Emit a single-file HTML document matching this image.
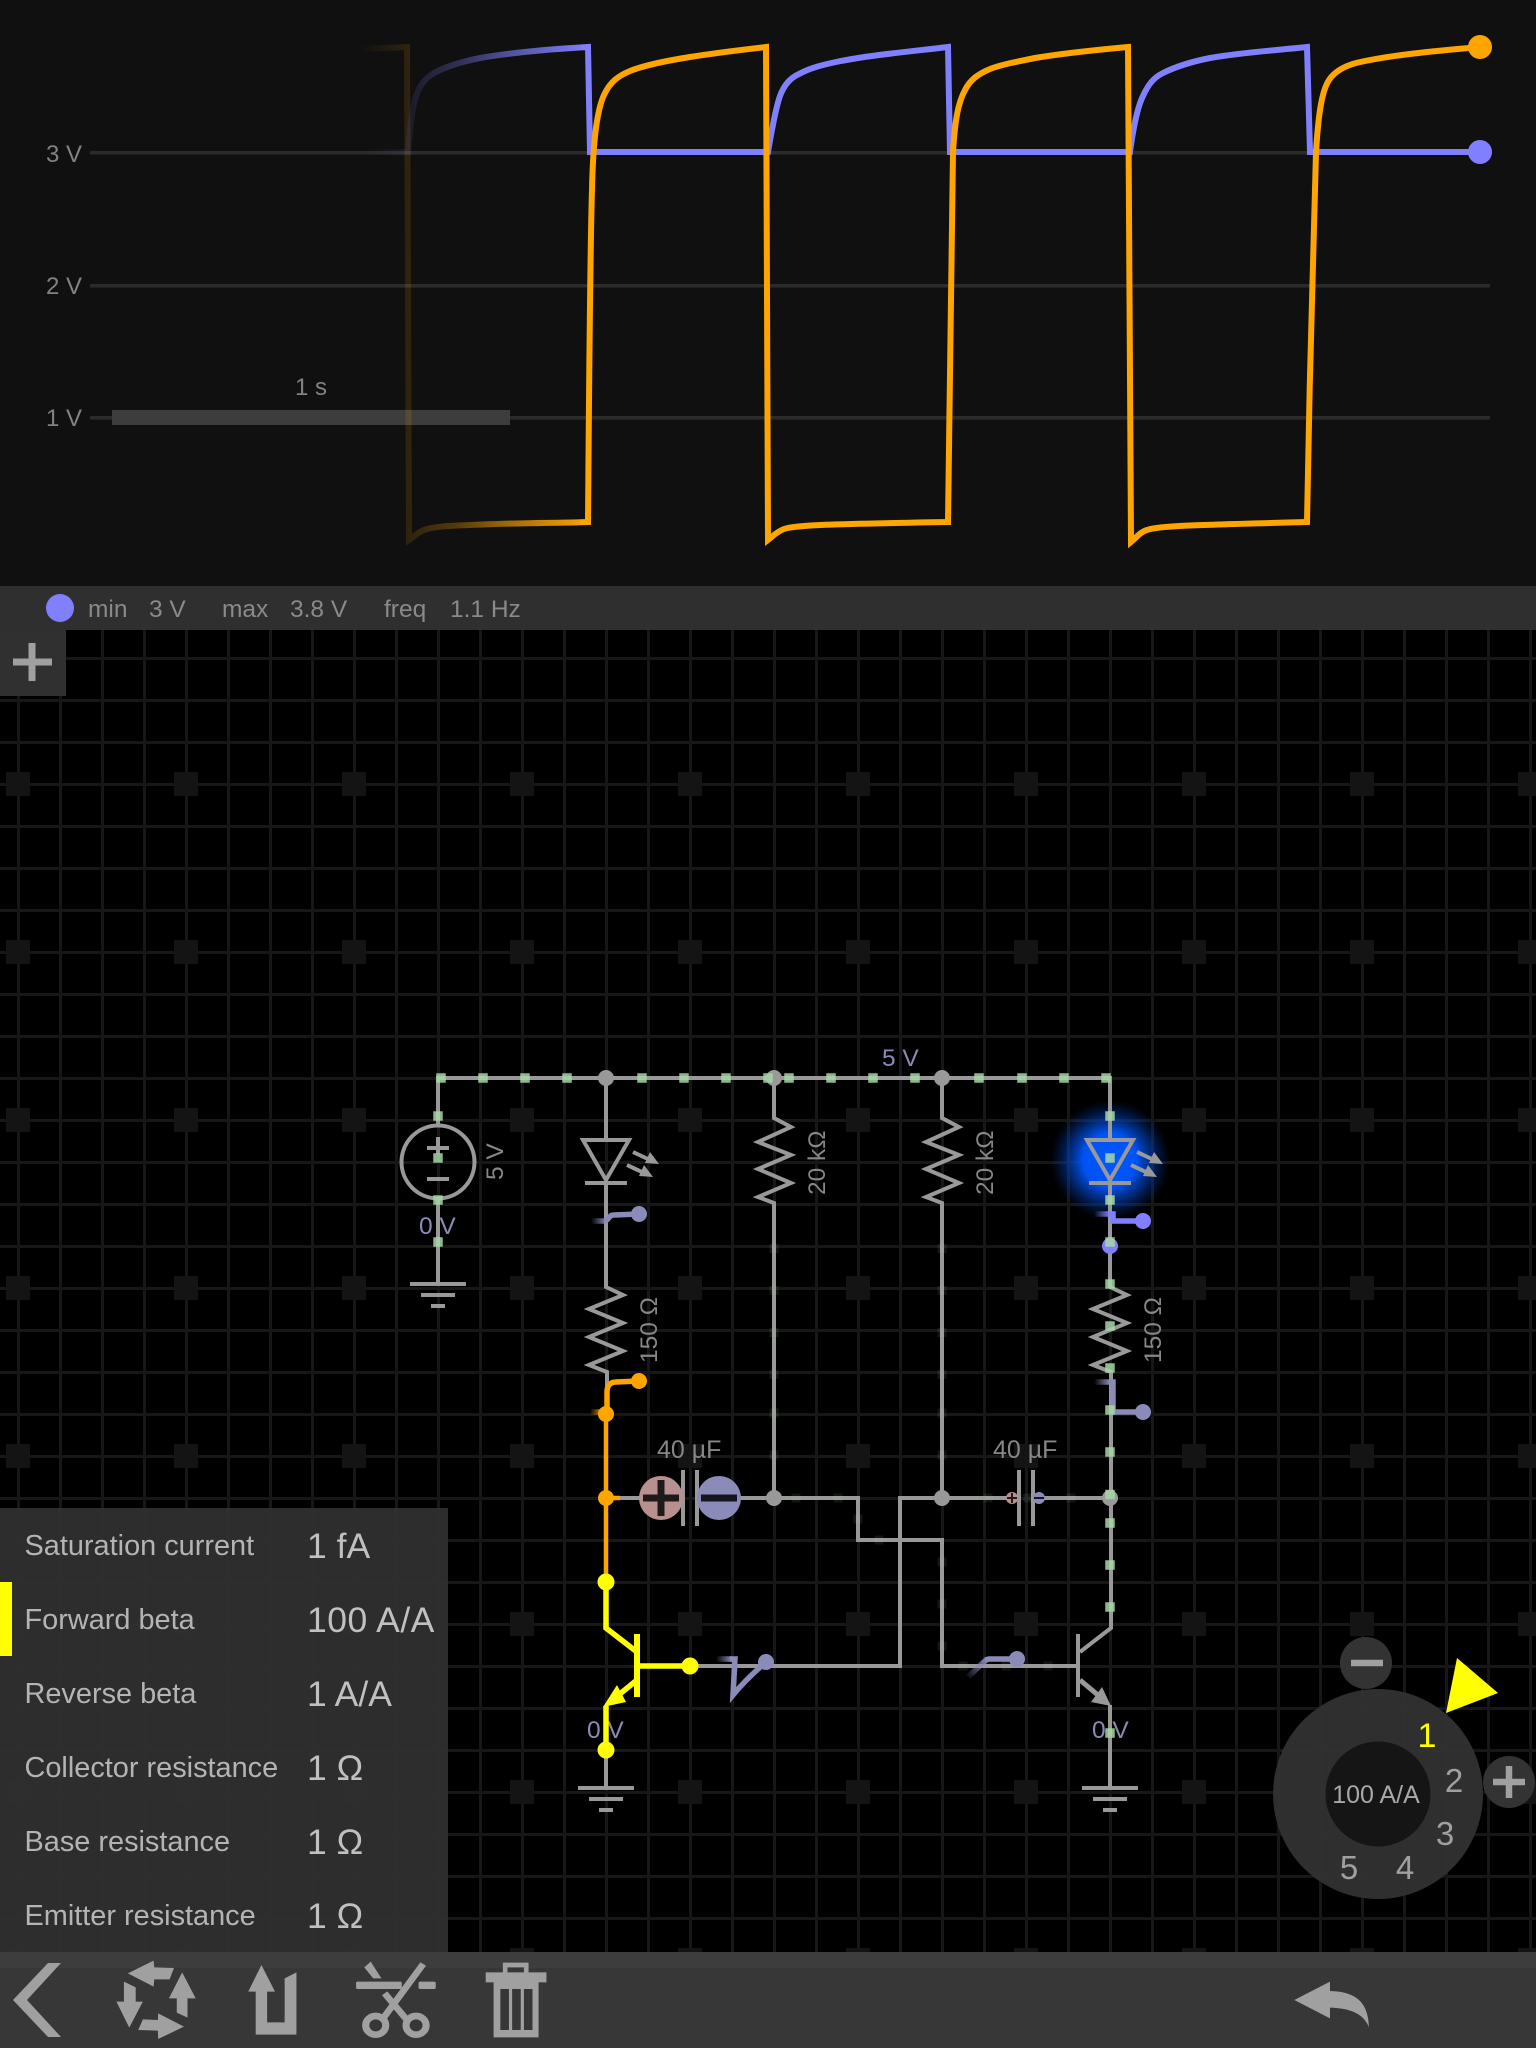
<!DOCTYPE html>
<html><head><meta charset="utf-8"><style>
html,body{margin:0;padding:0;background:#000;width:1536px;height:2048px;overflow:hidden}
svg{display:block}
text{font-family:"Liberation Sans",sans-serif}
</style></head><body>
<svg width="1536" height="2048" viewBox="0 0 1536 2048" xmlns="http://www.w3.org/2000/svg">
<defs>
<pattern id="g" width="42" height="42" patternUnits="userSpaceOnUse"><rect x="17" width="3" height="42" fill="#171717"/><rect y="27" width="42" height="3" fill="#171717"/></pattern>
<pattern id="m" width="168" height="168" patternUnits="userSpaceOnUse"><rect x="6" y="100" width="24" height="24" fill="#141414"/></pattern>
<linearGradient id="fb" gradientUnits="userSpaceOnUse" x1="370" y1="0" x2="590" y2="0"><stop offset="0" stop-color="#8080ff" stop-opacity="0"/><stop offset=".18" stop-color="#8080ff" stop-opacity=".1"/><stop offset=".4" stop-color="#8080ff" stop-opacity=".28"/><stop offset=".66" stop-color="#8080ff" stop-opacity=".62"/><stop offset="1" stop-color="#8080ff"/></linearGradient>
<linearGradient id="fo" gradientUnits="userSpaceOnUse" x1="360" y1="0" x2="590" y2="0"><stop offset="0" stop-color="#ffa500" stop-opacity="0"/><stop offset=".21" stop-color="#ffa500" stop-opacity=".13"/><stop offset=".42" stop-color="#ffa500" stop-opacity=".28"/><stop offset=".68" stop-color="#ffa500" stop-opacity=".65"/><stop offset="1" stop-color="#ffa500"/></linearGradient>
<radialGradient id="glow" gradientUnits="userSpaceOnUse" cx="1110" cy="1160" r="60"><stop offset="0" stop-color="#0058ff"/><stop offset=".45" stop-color="#0052f4"/><stop offset=".7" stop-color="#003fb8" stop-opacity=".6"/><stop offset="1" stop-color="#002a80" stop-opacity="0"/></radialGradient>
<linearGradient id="t1" gradientUnits="userSpaceOnUse" x1="591" y1="0" x2="607" y2="0"><stop offset="0" stop-color="#8b8bb9" stop-opacity="0"/><stop offset="1" stop-color="#8b8bb9"/></linearGradient>
<linearGradient id="t2" gradientUnits="userSpaceOnUse" x1="590" y1="0" x2="604" y2="0"><stop offset="0" stop-color="#ffa500" stop-opacity="0"/><stop offset="1" stop-color="#ffa500"/></linearGradient>
<linearGradient id="t3" gradientUnits="userSpaceOnUse" x1="1094" y1="0" x2="1110" y2="0"><stop offset="0" stop-color="#8080ff" stop-opacity="0"/><stop offset="1" stop-color="#8080ff"/></linearGradient>
<linearGradient id="t4" gradientUnits="userSpaceOnUse" x1="1094" y1="0" x2="1110" y2="0"><stop offset="0" stop-color="#8b8bb9" stop-opacity="0"/><stop offset="1" stop-color="#8b8bb9"/></linearGradient>
<linearGradient id="t5" gradientUnits="userSpaceOnUse" x1="716" y1="0" x2="732" y2="0"><stop offset="0" stop-color="#8b8bb9" stop-opacity="0"/><stop offset="1" stop-color="#8b8bb9"/></linearGradient>
<linearGradient id="t6" gradientUnits="userSpaceOnUse" x1="966" y1="1678" x2="988" y2="1660"><stop offset="0" stop-color="#8b8bb9" stop-opacity="0"/><stop offset="1" stop-color="#8b8bb9"/></linearGradient>
</defs>

<!-- scope -->
<rect width="1536" height="586" fill="#101010"/>
<g fill="#2b2b2b"><rect x="90" y="151" width="1400" height="3.5"/><rect x="90" y="284" width="1400" height="3.5"/><rect x="90" y="416" width="1400" height="3.5"/></g>
<rect x="112" y="410" width="398" height="15" fill="#3d3d3d"/>
<g fill="#828282" font-size="24"><text x="82" y="162" text-anchor="end">3 V</text><text x="82" y="294" text-anchor="end">2 V</text><text x="82" y="426" text-anchor="end">1 V</text><text x="311" y="395" text-anchor="middle">1 s</text></g>

<g fill="none" stroke-width="6" stroke-linejoin="miter">
<path stroke="url(#fb)" d="M372 152H408C410 130 412 108 416 96C420 84 426 78 434 73C445 67 460 62 480 58C515 52 555 49 580 47.500"/>
<path stroke="url(#fo)" d="M360 49C375 48 390 48 407 47L409 540C415 536 418 532 424 530C435 526 450 526 470 525C510 523 550 523 580 522.200"/>
<path stroke="#8080ff" d="M580 47.500L588 47L590 152H768C771 135 775 110 780 96C784 85 790 78 799 74C810 68 822 65 836 62C870 55 915 51 948 47L950 152H1130C1133 130 1137 108 1143 96C1148 85 1153 78 1163 73C1175 67 1190 62 1210 58C1245 52 1280 50 1307 47L1310 152H1480"/>
<path stroke="#ffa500" d="M580 522.200L588 522C589 400 590 250 592 190C593 140 597 110 604 95C610 82 618 76 630 71C645 65 665 61 690 57C715 53 740 50 766 47L768 540C772 537 776 532 784 529C795 525 830 524 948 522C950 400 951 250 953 152C955 120 958 103 965 90C970 80 978 74 990 69C1000 65 1015 62 1035 58C1065 53 1095 50 1128 47L1131 542C1136 538 1140 532 1147 530C1157 526 1190 525 1307 522C1309 400 1313 250 1316 152C1318 120 1321 92 1329 80C1335 71 1345 66 1356 63C1390 55 1435 51 1480 47"/>
</g>
<ellipse cx="1480" cy="47" rx="12" ry="12" fill="#ffa500"/>
<ellipse cx="1480" cy="152" rx="12" ry="12" fill="#8080ff"/>

<!-- status bar -->
<rect y="586" width="1536" height="44" fill="#2f2f2f"/>
<circle cx="60" cy="608" r="14" fill="#8080ff"/>
<g fill="#8a8a8a" font-size="24.500"><text x="88" y="617">min</text><text x="149" y="617">3 V</text><text x="222" y="617">max</text><text x="290" y="617">3.8 V</text><text x="384" y="617">freq</text><text x="450" y="617">1.1 Hz</text></g>

<!-- grid -->
<rect y="630" width="1536" height="1322" fill="#000"/>
<rect y="630" width="1536" height="1322" fill="url(#g)"/>
<rect y="630" width="1536" height="1322" fill="url(#m)"/>
<rect y="630" width="66" height="66" fill="#303030"/>
<path d="M13 662H52M32 643V681" stroke="#a0a0a0" stroke-width="7" fill="none"/>

<!-- glow -->
<circle cx="1110" cy="1160" r="60" fill="url(#glow)"/>

<!-- wires -->
<g fill="none" stroke="#999" stroke-width="4">
<path d="M438 1125V1078H1110V1140"/>
<path d="M438 1198V1284"/>
<circle cx="438" cy="1162" r="36.5"/>
<path d="M427 1148H449M438 1137V1154M427 1179H449" />
<path d="M410 1284H466M421 1295H455M431 1306H445"/>
<path d="M606 1078V1140M606 1183V1287L623 1295L589 1309L623 1323L589 1337L623 1351L589 1365L607 1372V1414"/>
<path d="M583 1140H629L606 1180Z"/>
<path d="M585 1183H627" />
<path d="M633 1152L650 1160M627 1165L644 1173"/>
<path d="M1087 1140H1133L1110 1180Z"/>
<path d="M1089 1183H1131"/>
<path d="M1137 1152L1154 1160M1131 1165L1148 1173"/>
<path d="M1110 1183V1287L1127 1295L1093 1309L1127 1323L1093 1337L1127 1351L1093 1365L1111 1372V1628L1080 1652"/>
<path d="M774 1078V1118L791 1127L758 1142L791 1155L758 1169L791 1183L758 1197L774 1203V1498"/>
<path d="M942 1078V1118L959 1127L926 1142L959 1155L926 1169L959 1183L926 1197L942 1203V1498"/>
<path d="M620 1498H640M697 1498H858V1540H942V1666H1078"/>
<path d="M690 1666H900V1498H1019M1033 1498H1110"/>
<path d="M683 1470V1526M697 1470V1526M1019 1470V1526M1033 1470V1526"/>
<path d="M1078 1634V1697"/>
<path d="M1080 1680L1105 1701" stroke-width="5"/>
<path d="M1110 1705V1788"/>
<path d="M1082 1788H1138M1093 1799H1127M1103 1810H1117"/>
<path d="M606 1750V1788M578 1788H634M589 1799H623M599 1810H613"/>
</g>
<g fill="#999">
<path d="M659 1164L645 1163L650 1152ZM653 1177L639 1176L644 1165ZM1163 1164L1149 1163L1154 1152ZM1157 1177L1143 1176L1148 1165Z"/>
<path d="M1111 1706L1091 1702L1102 1687Z"/>
<circle cx="606" cy="1078" r="8"/><circle cx="774" cy="1078" r="8"/><circle cx="942" cy="1078" r="8"/>
<circle cx="774" cy="1498" r="8"/><circle cx="942" cy="1498" r="8"/><circle cx="1110" cy="1498" r="8"/>
</g>

<!-- capacitor charges -->
<circle cx="661" cy="1498" r="22" fill="#b89090"/>
<path d="M643 1498H679M661 1480V1516" stroke="#1e1a1a" stroke-width="7" fill="none"/>
<circle cx="719" cy="1498" r="22" fill="#8b8bb9"/>
<path d="M701 1498H737" stroke="#15151f" stroke-width="7" fill="none"/>
<circle cx="1012" cy="1498" r="6" fill="#b89090"/>
<path d="M1007 1498H1017M1012 1493V1503" stroke="#1e1a1a" stroke-width="2" fill="none"/>
<circle cx="1039" cy="1498" r="6" fill="#8b8bb9"/>
<path d="M1034 1498H1044" stroke="#15151f" stroke-width="2" fill="none"/>

<!-- orange wires -->
<path d="M606 1414V1582M606 1498H620" stroke="#ffa500" stroke-width="4.500" fill="none"/>
<circle cx="606" cy="1414" r="8" fill="#ffa500"/><circle cx="606" cy="1498" r="8" fill="#ffa500"/>

<!-- labels -->
<g font-size="24.500" fill="#878787">
<text transform="translate(503 1180) rotate(-90)">5 V</text>
<text transform="translate(657 1363) rotate(-90)">150 Ω</text>
<text transform="translate(1161 1363) rotate(-90)">150 Ω</text>
<text transform="translate(825 1195) rotate(-90)">20 kΩ</text>
<text transform="translate(993 1195) rotate(-90)">20 kΩ</text>
<text x="657" y="1458" font-size="25">40 µF</text>
<text x="993" y="1458" font-size="25">40 µF</text>
</g>
<g font-size="24.500" fill="#8a8ab8">
<text x="419" y="1234">0 V</text>
<text x="882" y="1066">5 V</text>
<text x="587" y="1738">0 V</text>
<text x="1092" y="1738">0 V</text>
</g>

<!-- yellow transistor -->
<g fill="none" stroke="#ff0" >
<path d="M606 1582V1628L637 1652" stroke-width="5.500"/>
<path d="M637 1634V1697" stroke-width="6"/>
<path d="M637 1666H690" stroke-width="5.500"/>
<path d="M637 1680L610 1702" stroke-width="5.500"/>
<path d="M606 1706V1750" stroke-width="5.500"/>
</g>
<path d="M603 1707L617 1685L626 1702Z" fill="#ff0"/>
<g fill="#ff0"><circle cx="606" cy="1582" r="8.500"/><circle cx="690" cy="1666" r="8.500"/><circle cx="606" cy="1750" r="8.500"/></g>

<!-- probes -->
<g fill="none" stroke-width="5.500" stroke-linejoin="miter">
<path d="M591 1221H604" stroke="url(#t1)"/>
<path d="M604 1221C609 1221 608 1215 614 1215L639 1214" stroke="#8b8bb9"/>
<path d="M590 1412H604" stroke="url(#t2)"/>
<path d="M607 1412V1392C607 1386 610 1382 616 1382L639 1381" stroke="#ffa500"/>
<path d="M1094 1214H1110" stroke="url(#t3)"/>
<path d="M1110 1214H1113V1221H1143" stroke="#8080ff"/>
<path d="M1094 1382H1110" stroke="url(#t4)"/>
<path d="M1110 1382H1113V1412H1143" stroke="#8b8bb9"/>
<path d="M716 1659H732" stroke="url(#t5)"/>
<path d="M730 1659H735L733 1695C742 1684 752 1674 766 1662" stroke="#8b8bb9"/>
<path d="M968 1677L986 1660" stroke="url(#t6)"/>
<path d="M985 1660L989 1659H1017" stroke="#8b8bb9"/>
</g>
<g fill="#8b8bb9"><circle cx="639" cy="1214" r="8"/><circle cx="1143" cy="1412" r="8"/><circle cx="766" cy="1662" r="8"/><circle cx="1017" cy="1659" r="8"/></g>
<circle cx="639" cy="1381" r="8" fill="#ffa500"/>
<circle cx="1143" cy="1221" r="8" fill="#8080ff"/>
<circle cx="1110" cy="1246" r="8" fill="#8080ff"/>

<!-- current dots bright -->
<g fill="#a8d8a8" opacity=".85" stroke="#a8d8a8" stroke-width=".5">
<rect x="436.500" y="1073.500" width="9" height="9"/><rect x="478.500" y="1073.500" width="9" height="9"/><rect x="520.500" y="1073.500" width="9" height="9"/><rect x="562.500" y="1073.500" width="9" height="9"/><rect x="637.500" y="1073.500" width="9" height="9"/><rect x="679.500" y="1073.500" width="9" height="9"/><rect x="721.500" y="1073.500" width="9" height="9"/><rect x="763.500" y="1073.500" width="9" height="9"/><rect x="784.500" y="1073.500" width="9" height="9"/><rect x="826.500" y="1073.500" width="9" height="9"/><rect x="868.500" y="1073.500" width="9" height="9"/><rect x="910.500" y="1073.500" width="9" height="9"/><rect x="974.500" y="1073.500" width="9" height="9"/><rect x="1017.500" y="1073.500" width="9" height="9"/><rect x="1059.500" y="1073.500" width="9" height="9"/><rect x="1101.500" y="1073.500" width="9" height="9"/>
<rect x="433.500" y="1111.500" width="9" height="9"/><rect x="433.500" y="1153.500" width="9" height="9"/><rect x="433.500" y="1195.500" width="9" height="9"/><rect x="433.500" y="1237.500" width="9" height="9"/>
<rect x="1105.500" y="1111.500" width="9" height="9"/><rect x="1105.500" y="1153.500" width="9" height="9"/><rect x="1105.500" y="1195.500" width="9" height="9"/><rect x="1105.500" y="1237.500" width="9" height="9"/><rect x="1105.500" y="1279.500" width="9" height="9"/><rect x="1105.500" y="1321.500" width="9" height="9"/><rect x="1105.500" y="1363.500" width="9" height="9"/><rect x="1105.500" y="1405.500" width="9" height="9"/><rect x="1105.500" y="1447.500" width="9" height="9"/><rect x="1105.500" y="1490" width="9" height="9"/><rect x="1105.500" y="1518.500" width="9" height="9"/><rect x="1105.500" y="1560.500" width="9" height="9"/><rect x="1105.500" y="1602.500" width="9" height="9"/><rect x="1105.500" y="1728.500" width="9" height="9"/>
</g>
<!-- current dots faint -->
<g fill="#a8d8a8" opacity=".1">
<rect x="769.500" y="1244" width="9" height="9"/><rect x="769.500" y="1286" width="9" height="9"/><rect x="769.500" y="1328" width="9" height="9"/><rect x="769.500" y="1370" width="9" height="9"/><rect x="769.500" y="1408.500" width="9" height="9"/><rect x="769.500" y="1450.500" width="9" height="9"/>
<rect x="937.500" y="1244" width="9" height="9"/><rect x="937.500" y="1286" width="9" height="9"/><rect x="937.500" y="1328" width="9" height="9"/><rect x="937.500" y="1370" width="9" height="9"/><rect x="937.500" y="1408.500" width="9" height="9"/><rect x="937.500" y="1450.500" width="9" height="9"/>
<rect x="791.500" y="1493.500" width="9" height="9"/><rect x="833.500" y="1493.500" width="9" height="9"/><rect x="853.500" y="1514.500" width="9" height="9"/><rect x="874.500" y="1535.500" width="9" height="9"/>
<rect x="983.500" y="1493.500" width="9" height="9"/><rect x="1023.500" y="1493.500" width="9" height="9"/><rect x="1066.500" y="1493.500" width="9" height="9"/>
<rect x="937.500" y="1557.500" width="9" height="9"/><rect x="937.500" y="1599.500" width="9" height="9"/><rect x="937.500" y="1641.500" width="9" height="9"/>
<rect x="958.500" y="1661.500" width="9" height="9"/><rect x="1001.500" y="1661.500" width="9" height="9"/><rect x="1043.500" y="1661.500" width="9" height="9"/>
</g>

<!-- left panel -->
<rect y="1508" width="448" height="444" fill="#2f2f2f" opacity=".95"/>
<rect y="1582" width="12" height="74" fill="#ff0"/>
<g font-size="28.900" fill="#b4b4b4">
<text x="24.500" y="1555">Saturation current</text>
<text x="24.500" y="1629">Forward beta</text>
<text x="24.500" y="1703">Reverse beta</text>
<text x="24.500" y="1777">Collector resistance</text>
<text x="24.500" y="1851">Base resistance</text>
<text x="24.500" y="1925">Emitter resistance</text>
</g>
<g font-size="35.500" fill="#c0c0c0">
<text x="307" y="1558">1 fA</text>
<text x="307" y="1632" letter-spacing=".5">100 A/A</text>
<text x="307" y="1706">1 A/A</text>
<text x="307" y="1780">1 Ω</text>
<text x="307" y="1854">1 Ω</text>
<text x="307" y="1928">1 Ω</text>
</g>

<!-- dial -->
<circle cx="1378" cy="1794" r="105" fill="#313131" opacity=".95"/>
<circle cx="1378" cy="1794" r="52.500" fill="#151515"/>
<text x="1376" y="1803" text-anchor="middle" font-size="25" fill="#a8a8a8">100 A/A</text>
<text x="1427" y="1747" text-anchor="middle" font-size="34" fill="#ff0">1</text>
<g font-size="33" fill="#a0a0a0" text-anchor="middle"><text x="1454" y="1792">2</text><text x="1445" y="1845">3</text><text x="1405" y="1879">4</text><text x="1349" y="1879">5</text></g>
<path d="M1457 1658L1498 1693L1446 1713Z" fill="#ff0"/>
<circle cx="1366" cy="1663" r="26" fill="#333"/>
<path d="M1351 1663H1383" stroke="#a0a0a0" stroke-width="6.500" fill="none"/>
<circle cx="1509" cy="1782" r="26" fill="#333"/>
<path d="M1493 1782H1525M1509 1766V1798" stroke="#a0a0a0" stroke-width="6.500" fill="none"/>

<!-- toolbar -->
<rect y="1952" width="1536" height="96" fill="#373737"/>
<rect y="1952" width="1536" height="16" fill="#3d3d3d"/>
<g fill="#a0a0a0">
<path d="M48 1963H61L27 2000L61 2037H48L13 2000Z"/>
<g transform="translate(0 1940) scale(.35714 .33333)">
<path d="M358 100L430 62L432 82L487 84L475 118L432 118L430 140Z"/>
<path d="M510 97L548 175L525 175L525 233L495 218L495 175L473 175Z"/>
<path d="M515 260L443 297L442 272L387 270L400 238L442 240L443 220Z"/>
<path d="M362 263L326 185L347 185L347 125L380 142L380 185L400 185Z"/>
<path d="M732 75L770 155L748 155L748 247L797 247L797 115L830 97L830 284L716 284L716 155L695 155Z"/>
<path d="M1038 65L1020 82L1045 115L1068 115Z"/>
<rect x="997" y="125" width="128" height="22" rx="4"/>
<rect x="1172" y="125" width="48" height="22" rx="4"/>
<path d="M1185 72L1072 236M1077 160L1138 238" stroke="#a0a0a0" stroke-width="19" fill="none"/>
<circle cx="1052" cy="256" r="28" fill="none" stroke="#a0a0a0" stroke-width="20"/>
<circle cx="1165" cy="256" r="28" fill="none" stroke="#a0a0a0" stroke-width="20"/>
<path d="M1360 97H1408V68H1480V97H1530V127H1508V292H1382V127H1360ZM1421 82V97H1467V82Z" fill-rule="evenodd"/>
<rect x="1401" y="147" width="24" height="123" fill="#373737"/>
<rect x="1434" y="147" width="24" height="123" fill="#373737"/>
<rect x="1467" y="147" width="24" height="123" fill="#373737"/>
</g>
<path transform="translate(1240 1620) scale(.33333)" d="M163 1140L270 1085V1113C340 1115 385 1140 387 1222C370 1180 330 1165 270 1163V1195Z" />
</g>
</svg>
</body></html>
